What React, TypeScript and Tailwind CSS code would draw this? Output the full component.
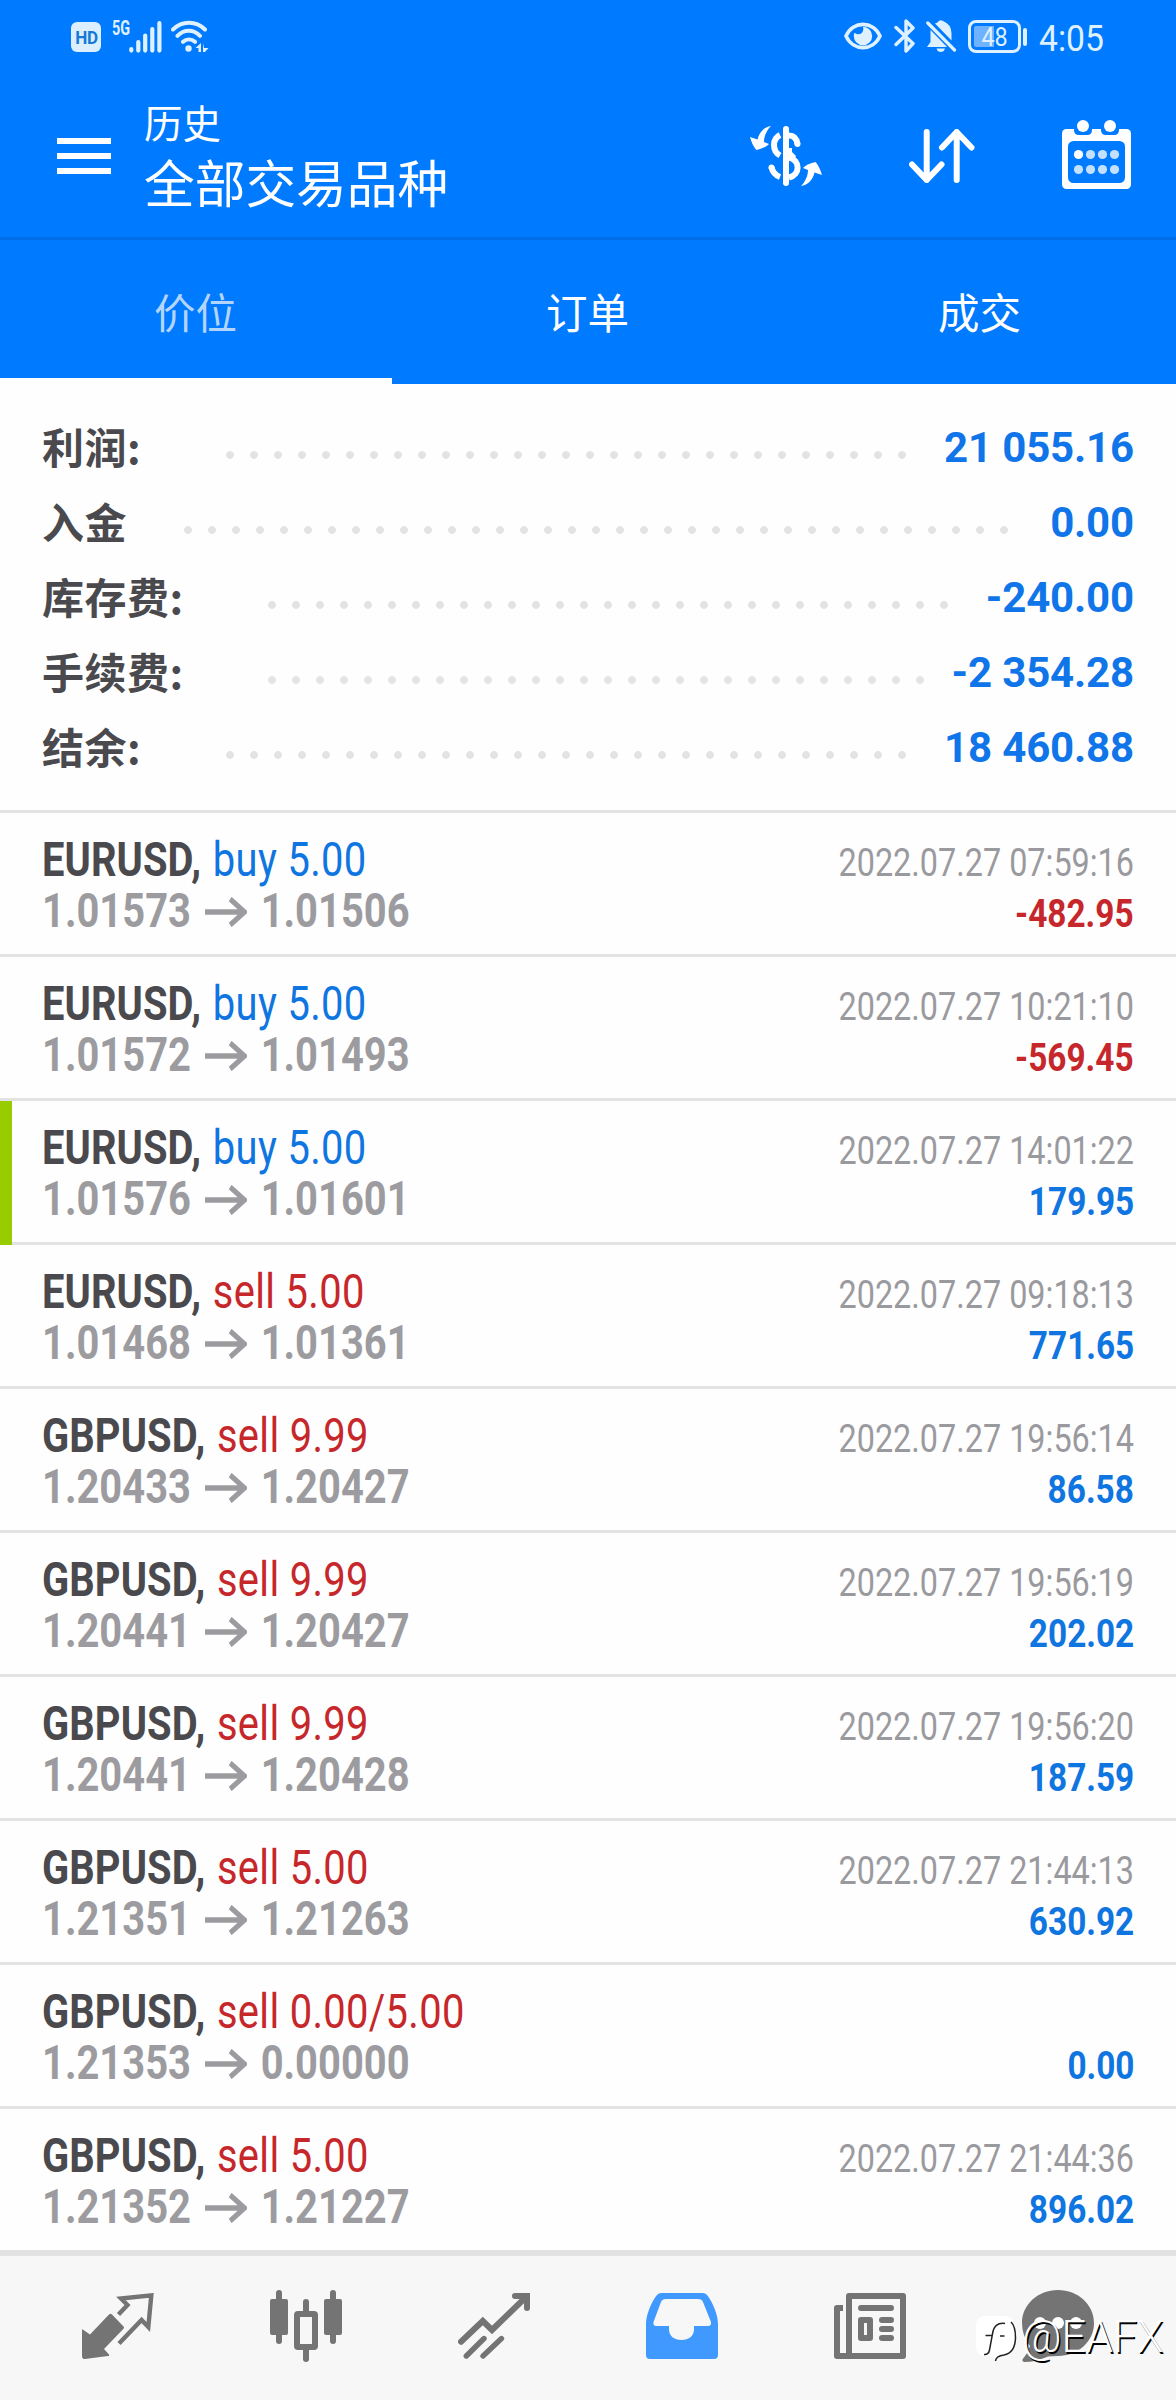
import React from "react";

interface SummaryRow {
  label: string;
  value: string;
  labelWidth: string;
  dotsWidth: string;
}

interface Deal {
  symbol: string;
  side: "buy" | "sell";
  volume: string;
  open: string;
  close: string;
  time: string;
  profit: string;
  marked?: boolean;
}

const SUMMARY: SummaryRow[] = [
  { label: "利润:", value: "21 055.16", labelWidth: "w-[176px]", dotsWidth: "w-[696px]" },
  { label: "入金", value: "0.00", labelWidth: "w-[134px]", dotsWidth: "w-[840px]" },
  { label: "库存费:", value: "-240.00", labelWidth: "w-[218px]", dotsWidth: "w-[696px]" },
  { label: "手续费:", value: "-2 354.28", labelWidth: "w-[218px]", dotsWidth: "w-[672px]" },
  { label: "结余:", value: "18 460.88", labelWidth: "w-[176px]", dotsWidth: "w-[696px]" },
];

const DEALS: Deal[] = [
  { symbol: "EURUSD", side: "buy", volume: "5.00", open: "1.01573", close: "1.01506", time: "2022.07.27 07:59:16", profit: "-482.95" },
  { symbol: "EURUSD", side: "buy", volume: "5.00", open: "1.01572", close: "1.01493", time: "2022.07.27 10:21:10", profit: "-569.45" },
  { symbol: "EURUSD", side: "buy", volume: "5.00", open: "1.01576", close: "1.01601", time: "2022.07.27 14:01:22", profit: "179.95", marked: true },
  { symbol: "EURUSD", side: "sell", volume: "5.00", open: "1.01468", close: "1.01361", time: "2022.07.27 09:18:13", profit: "771.65" },
  { symbol: "GBPUSD", side: "sell", volume: "9.99", open: "1.20433", close: "1.20427", time: "2022.07.27 19:56:14", profit: "86.58" },
  { symbol: "GBPUSD", side: "sell", volume: "9.99", open: "1.20441", close: "1.20427", time: "2022.07.27 19:56:19", profit: "202.02" },
  { symbol: "GBPUSD", side: "sell", volume: "9.99", open: "1.20441", close: "1.20428", time: "2022.07.27 19:56:20", profit: "187.59" },
  { symbol: "GBPUSD", side: "sell", volume: "5.00", open: "1.21351", close: "1.21263", time: "2022.07.27 21:44:13", profit: "630.92" },
  { symbol: "GBPUSD", side: "sell", volume: "0.00/5.00", open: "1.21353", close: "0.00000", time: "", profit: "0.00" },
  { symbol: "GBPUSD", side: "sell", volume: "5.00", open: "1.21352", close: "1.21227", time: "2022.07.27 21:44:36", profit: "896.02" },
];

const TABS = ["价位", "订单", "成交"];

const StatusBar: React.FC = () => (
  <div className="flex h-[72px] items-start justify-between pl-[71px] pr-[72px] pt-[19px] text-[#dff1ff]">
    <div className="flex items-start">
      <span className="mt-[3px] flex h-[30px] w-[30px] items-center justify-center rounded-[6px] bg-[#dcefff] text-[#1479d8]">
        <span className="scale-x-90 text-[19px] font-bold leading-none tracking-tight">HD</span>
      </span>
      <span className="ml-[11px] mt-[1px] h-[16px] w-[16px] origin-left scale-x-[0.72] text-[20px] font-bold leading-[16px]">5G</span>
      <svg width="33" height="32" viewBox="0 0 33 32" className="ml-[1px] mt-[2px]" stroke="currentColor" strokeWidth="4.2" strokeLinecap="round">
        <path d="M2.3 28v1.6M9.3 21v8.6M16.2 14.5v15.1M23.3 8v21.6M30.4 2.2v27.4" />
      </svg>
      <svg width="38" height="33" viewBox="0 0 38 33" className="ml-[9px] mt-[1px]" fill="none" stroke="currentColor" strokeWidth="4" strokeLinecap="round">
        <path d="M2 9.5C11 0.5 25 0.5 34 9.5M6.5 15.8C13 9 22.5 9 29 15.8M12 21.8C15.5 18.6 20.5 18.6 24 21.8" />
        <circle cx="17.5" cy="28.5" r="3.2" fill="currentColor" stroke="none" />
        <path d="M30 23v9h-2.500v-4h-3zM32 23l1 5h4.500l-3.500 4h-2z" fill="currentColor" stroke="none" />
      </svg>
    </div>
    <div className="flex items-start">
      <svg width="38" height="28" viewBox="0 0 38 28" className="mt-[3px]">
        <path d="M2 14C9 -1.500 29 -1.500 36 14C29 29.500 9 29.500 2 14Z" fill="none" stroke="currentColor" strokeWidth="3.600" />
        <path d="M19 4.800a9.200 9.200 0 1 1 -9.200 9.200q0-1.800.7-3.200q4 2.800 7 .4q2.600-2.600 1.500-6.400z" fill="currentColor" />
      </svg>
      <svg width="22" height="34" viewBox="0 0 22 34" className="ml-[12px]" fill="none" stroke="currentColor" strokeWidth="3.400" strokeLinejoin="round" strokeLinecap="round">
        <path d="M2 8.500L19 24.500L12 32V2L19 9L2 25.500" />
      </svg>
      <svg width="31" height="34" viewBox="0 0 31 34" className="ml-[10px]">
        <path d="M9 4.500L11.500 3.500Q14 0 17 2Q25 5 25.500 14V21.500ZM4.500 11L21 28H1L4.500 23ZM10.500 29.500H19Q18 33 14.700 33Q11.500 33 10.500 29.500Z" fill="currentColor" />
        <path d="M1.800 4L28.500 31" stroke="currentColor" strokeWidth="3.200" strokeLinecap="round" />
      </svg>
      <div className="ml-[11px] mt-[1px] flex items-center">
        <div className="flex h-[33px] w-[53px] items-center justify-center rounded-[8px] border-[3px] border-current bg-linear-to-r from-[#6fb3ff] from-50% to-transparent to-50% bg-clip-content p-[3px]">
          <span className="scale-x-90 text-[26px] leading-none">48</span>
        </div>
        <div className="ml-[2px] h-[18px] w-[4px] rounded-[2px] bg-current" />
      </div>
      <span className="ml-[12px] inline-block w-[65px] origin-left scale-x-[0.91] text-[37px] leading-[39px]">4:05</span>
    </div>
  </div>
);

const CurrencyIcon: React.FC = () => (
  <svg width="72" height="60" viewBox="0 0 72 60" fill="none" stroke="white" strokeWidth="6">
    <path d="M36 3V57" strokeLinecap="round" />
    <path d="M30 9C22 13 22 25 30 29.500M39 31.500C50.500 34 50.500 49 39 51.500M39 22V31" />
    <path d="M47.500 18C46.500 12 43 9.500 39 9.500M21.500 41C22.500 46 26 49.500 30 51" />
    <path d="M47.500 18v.1M21.500 41.500v.1" strokeLinecap="round" />
    <path d="M38 22L46 30L44 34L38 32Z" fill="white" stroke="none" />
    <g fill="white" stroke="none">
      <path id="cash-arrow" d="M21 0C15 .5 9 6 7.500 13.500L0 11C1 15 3.500 21 6.500 24C10 23 15 22 19 18L14 16C14 10 17 4 21 0Z" />
      <use href="#cash-arrow" transform="rotate(180 36 30)" />
    </g>
  </svg>
);

const SortIcon: React.FC = () => (
  <svg width="66" height="54" viewBox="0 0 66 54" fill="none" stroke="white" strokeWidth="6" strokeLinecap="round" strokeLinejoin="round">
    <path d="M17.700 3V51M3 35.500L17.700 51L32.500 35.500M47.700 51V3M33 18.500L47.700 3L62.500 18.500" />
  </svg>
);

const CalendarIcon: React.FC = () => (
  <svg width="69" height="69" viewBox="0 0 69 69">
    <rect y="9" width="69" height="60" rx="4.500" fill="white" />
    <path d="M12 6V10Q12 15 17 15H25Q30 15 30 10V6ZM39 6V10Q39 15 44 15H52Q57 15 57 10V6Z" fill="#007aff" />
    <rect x="6" y="21" width="57" height="42" rx="5.500" fill="#007aff" />
    <circle cx="21" cy="6" r="6" fill="white" />
    <circle cx="48" cy="6" r="6" fill="white" />
    {[34.5, 49.5].map((y) =>
      [16.5, 28.5, 40.5, 52.5].map((x) => (
        <circle key={`${x}-${y}`} cx={x} cy={y} r="4.6" fill={x < 20 && y < 40 ? "white" : "#c3e0ff"} />
      ))
    )}
  </svg>
);

const Toolbar: React.FC = () => (
  <div className="flex h-[165px] items-start pl-[57px] pr-[45px] text-white">
    <div className="mt-[66px] flex w-[54px] flex-col gap-[9px]">
      <div className="h-[6px] bg-white" />
      <div className="h-[6px] bg-white" />
      <div className="h-[6px] bg-white" />
    </div>
    <div className="ml-[33px] mt-[31px] flex-1">
      <div className="text-[38.5px] leading-[44px]">历史</div>
      <div className="mt-[9px] text-[50.7px] leading-[60px]">全部交易品种</div>
    </div>
    <div className="mt-[54px]"><CurrencyIcon /></div>
    <div className="ml-[87px] mt-[57px]"><SortIcon /></div>
    <div className="ml-[87px] mt-[48px]"><CalendarIcon /></div>
  </div>
);

const DealRow: React.FC<{ deal: Deal }> = ({ deal }) => {
  const sideColor = deal.side === "buy" ? "text-[#0f75e0]" : "text-[#c6272b]";
  const profitColor = deal.profit.startsWith("-") ? "text-[#c6272b]" : "text-[#0f75e0]";
  return (
    <div className="relative flex h-[144px] justify-between border-t-[3px] border-[#e3e3e3] pl-[42px] pr-[42px] pt-[22px]">
      {deal.marked && <div className="absolute left-0 top-0 z-10 h-[144px] w-[12px] bg-[#99cc00]" />}
      <div className="origin-left scale-x-[0.84] whitespace-nowrap text-[47.5px]">
        <div className="leading-[51px]">
          <span className="font-bold tracking-[0.1px] text-[#4a4a4e]">{deal.symbol},</span>{" "}
          <span className={`ml-[2px] tracking-[0.4px] ${sideColor}`}>{`${deal.side} ${deal.volume}`}</span>
        </div>
        <div className="flex items-center font-bold leading-[51px] text-[#9c9ca0]">
          {deal.open}
          <svg width="50" height="30" viewBox="0 0 50 30" preserveAspectRatio="none" className="ml-[17px] mr-[16px]" fill="none" stroke="currentColor" strokeWidth="5.500">
            <path d="M0 15H46M30 2L47 15L30 28" />
          </svg>
          {deal.close}
        </div>
      </div>
      <div className="flex flex-col items-end whitespace-nowrap text-[39px]">
        <div className="h-[51px] origin-right scale-x-[0.83] leading-[57px] text-[#9a9a9e]">{deal.time}</div>
        <div className={`origin-right scale-x-[0.855] font-bold leading-[57px] ${profitColor}`}>{deal.profit}</div>
      </div>
    </div>
  );
};

const BottomNav: React.FC = () => (
  <div className="relative flex h-[150px] items-start border-t-[6px] border-[#e2e2e2] bg-[#f7f7f7] px-[24px] pt-[34px] text-[#747474]">
    <div className="flex w-[188px] justify-center pt-[3px]">
      <svg width="72" height="66" viewBox="0 0 72 66" fill="currentColor">
        <path d="M0 36L8 41.500L27 21.500Q28.500 20 30 21.500L41.500 33.500Q42.500 34.700 41.500 35.800L22 56L27 61.500Q27.500 63 26 63L3 66Q0 66.500 0 63Z" />
        <path d="M36.500 21.500L45.500 12L39 5.500L69.300 2.400L66.300 34L59.600 27L37 50.500" fill="none" stroke="currentColor" strokeWidth="4.400" />
      </svg>
    </div>
    <div className="flex w-[188px] justify-center">
      <svg width="72" height="72" viewBox="0 0 72 72" fill="currentColor">
        <rect x="6" width="6" height="54" rx="3" />
        <rect y="9" width="18" height="36" rx="2" />
        <rect x="60" width="6" height="54" rx="3" />
        <rect x="54" y="9" width="18" height="36" rx="2" />
        <rect x="33" y="9" width="6" height="15" rx="3" />
        <rect x="33" y="57" width="6" height="15" rx="3" />
        <rect x="27" y="24" width="18" height="33" rx="1" fill="none" stroke="currentColor" strokeWidth="6" />
      </svg>
    </div>
    <div className="flex w-[188px] justify-center pt-[3px]">
      <svg width="72" height="66" viewBox="0 0 72 66" fill="none" stroke="currentColor" strokeWidth="6" strokeLinecap="round">
        <path d="M3 48.700L24.800 28L34 37L68 4M57 3H69V15" />
        <path d="M8.300 63L26 45.500M25 63L43.500 45.500" strokeWidth="5.400" />
      </svg>
    </div>
    <div className="flex w-[188px] justify-center pt-[3px]">
      <svg width="72" height="66" viewBox="0 0 72 66" fill="#4099ff" fillRule="evenodd">
        <path d="M15 0H57Q60 0 61.500 2.500C67 10 72 22 72 31V62Q72 66 68 66H4Q0 66 0 62V31C0 22 5 10 10.500 2.500Q12 0 15 0ZM20 6H52Q56 6 57 9L65 29Q65.500 33 62 33H48V36C48 43 43 47 35.500 47C28 47 23 43 23 36V33H10Q7 33 7.500 29L15 9Q16 6 20 6Z" />
      </svg>
    </div>
    <div className="flex w-[188px] justify-center pt-[3px]">
      <svg width="72" height="66" viewBox="0 0 72 66" fill="none" stroke="currentColor" strokeWidth="6" strokeLinejoin="round">
        <path d="M15 3H69V63H15ZM15 63H3V15H9" />
        <path d="M27 15H57M48 27H57M48 36H57M48 45H57" strokeLinecap="round" />
        <path d="M27 27H36V45H27Z" />
      </svg>
    </div>
    <div className="flex w-[188px] justify-center">
      <svg width="72" height="72" viewBox="0 0 72 72" fill="currentColor">
        <path d="M36 0C56 0 72 14.500 72 33S56 66 36 66Q30 66 26 66.500Q14 72 2 72Q-1 71 1.500 68Q6 63 8 56Q0 46 0 33C0 14.500 16 0 36 0Z" />
        <g fill="white">
          <circle cx="18" cy="33" r="6" />
          <circle cx="36" cy="33" r="6" />
          <circle cx="54" cy="33" r="6" />
        </g>
      </svg>
    </div>
    {/* community watermark over the chat tab */}
    <div className="absolute left-[976px] top-[58px] flex items-start text-white">
      <svg width="42" height="52" viewBox="0 0 42 52">
        <path d="M10 2H28Q38 2 39 12Q42 40 29 42Q22 43 19 47Q17 42 10 42Q0 42 0 32V12Q0 2 10 2Z" fill="white" />
        <path d="M29 9.500Q18 8 16.500 20L13.500 36Q12.500 41 8 40.500M9.500 21.500H16.500M24 22H28.500M35 8Q39.500 12 39.500 24Q39 39 28 41Q20 42 19.500 47" fill="none" stroke="#222" strokeWidth="1.500" />
      </svg>
      <span className="ml-[4px] inline-block origin-left scale-x-[0.98] text-[44px] font-light leading-[46px] [text-shadow:1.5px_1.5px_0_#000]">@EAFX</span>
    </div>
  </div>
);

export default function App() {
  return (
    <div className="flex h-[2400px] w-[1176px] flex-col overflow-hidden bg-[#fefefe] font-[Roboto,'Noto_Sans_CJK_SC',sans-serif]">
      <div className="bg-[#007aff]">
        <StatusBar />
        <Toolbar />
        <div className="grid h-[147px] grid-cols-3 border-t-[3px] border-[#006ee6]">
          {TABS.map((tab, idx) => (
            <div key={tab} className={`flex items-center justify-center border-b-[6px] pr-[1px] pt-[13px] text-[41.5px] ${
              idx === 0 ? "border-[#fefefe] text-[#b3d5fb]" : "border-transparent text-white"
            }`}>
              {tab}
            </div>
          ))}
        </div>
      </div>
      <div className="h-[426px] px-[42px] pt-[26px]">
        {SUMMARY.map((row) => (
          <div key={row.label} className="flex h-[75px] items-center text-[42px] font-bold">
            <span className={`${row.labelWidth} -mt-[5px] shrink-0 whitespace-nowrap font-['Noto_Sans_CJK_SC',sans-serif] tracking-[0.5px] text-[#4a4a4e]`}>{row.label}</span>
            <div className={`${row.dotsWidth} mt-[14px] h-[24px] shrink-0 bg-[radial-gradient(circle,#e3e3e3_3.5px,transparent_4.3px)] bg-[length:24px_24px]`} />
            <span className="ml-auto whitespace-nowrap tracking-[-0.15px] text-[#0f75e8]">{row.value}</span>
          </div>
        ))}
      </div>
      {DEALS.map((deal) => (
        <DealRow key={`${deal.time}-${deal.open}`} deal={deal} />
      ))}
      <BottomNav />
    </div>
  );
}
